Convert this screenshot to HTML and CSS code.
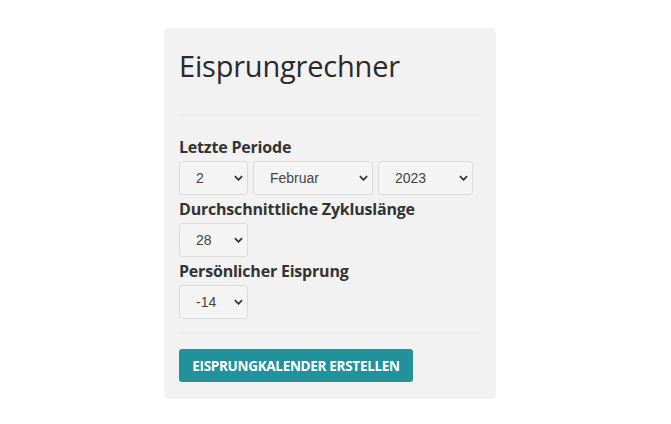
FILE: index.html
```html
<!DOCTYPE html>
<html lang="de">
<head>
<meta charset="utf-8">
<title>Eisprungrechner</title>
<link rel="stylesheet" href="styles.css">
</head>
<body>
<div class="page">
  <form class="card">
    <h1 class="title">Eisprungrechner</h1>
    <hr class="rule rule-top">
    <label class="label">Letzte Periode</label>
    <div class="row">
      <div class="sel w-day"><select><option>2</option></select><svg class="chev" viewBox="0 0 10 6" width="9" height="6"><path d="M1 1l4 4 4-4" fill="none" stroke="#333" stroke-width="2"/></svg></div>
      <div class="sel w-month"><select><option>Februar</option></select><svg class="chev" viewBox="0 0 10 6" width="9" height="6"><path d="M1 1l4 4 4-4" fill="none" stroke="#333" stroke-width="2"/></svg></div>
      <div class="sel w-year"><select><option>2023</option></select><svg class="chev" viewBox="0 0 10 6" width="9" height="6"><path d="M1 1l4 4 4-4" fill="none" stroke="#333" stroke-width="2"/></svg></div>
    </div>
    <label class="label">Durchschnittliche Zykluslänge</label>
    <div class="row">
      <div class="sel w-day"><select><option>28</option></select><svg class="chev" viewBox="0 0 10 6" width="9" height="6"><path d="M1 1l4 4 4-4" fill="none" stroke="#333" stroke-width="2"/></svg></div>
    </div>
    <label class="label">Persönlicher Eisprung</label>
    <div class="row">
      <div class="sel w-day"><select><option>-14</option></select><svg class="chev" viewBox="0 0 10 6" width="9" height="6"><path d="M1 1l4 4 4-4" fill="none" stroke="#333" stroke-width="2"/></svg></div>
    </div>
    <hr class="rule rule-bottom">
    <button type="button" class="btn">Eisprungkalender erstellen</button>
  </form>
</div>
</body>
</html>
```

FILE: styles.css
```css
html, body {
  margin: 0;
  padding: 0;
  background: #ffffff;
}
.page {
  padding: 28px 0 0 164px;
}
.card {
  width: 332px;
  box-sizing: border-box;
  background: #f2f2f2;
  border-radius: 5px;
  padding: 21px 15px 17px 15px;
  font-family: "Open Sans", "Noto Sans", sans-serif;
  color: #333333;
  display: flex;
  flex-direction: column;
  align-items: flex-start;
}
.title {
  margin: 0;
  font-size: 29px;
  font-weight: 500;
  line-height: 34px;
  letter-spacing: -0.2px;
  color: #2a2a2a;
}
.rule {
  align-self: stretch;
  border: 0;
  border-top: 1px solid #e8e8e8;
  margin: 0;
}
.rule-top { margin-top: 32px; margin-bottom: 20px; }
.rule-bottom { margin-top: 10px; margin-bottom: 16px; }
.label {
  font-size: 16px;
  font-weight: 700;
  line-height: 22px;
  letter-spacing: -0.2px;
  color: #333333;
}
.row {
  display: flex;
  gap: 5px;
  margin-top: 3px;
  margin-bottom: 3px;
}
.sel {
  position: relative;
  height: 34px;
}
.sel select {
  appearance: none;
  -webkit-appearance: none;
  width: 100%;
  height: 34px;
  box-sizing: border-box;
  border: 1px solid #dcdcdc;
  border-radius: 3px;
  background: #f4f4f4;
  font-family: "Liberation Sans", Arial, sans-serif;
  font-size: 14px;
  color: #444444;
  padding: 0 0 0 16px;
  outline: none;
}
.w-day { width: 69px; }
.w-month { width: 120px; }
.w-year { width: 95px; }
.chev {
  position: absolute;
  right: 5px;
  top: 14px;
  pointer-events: none;
}
.btn {
  width: 234px;
  height: 33px;
  border: 0;
  border-radius: 3px;
  background: #21929b;
  color: #ffffff;
  font-family: "Open Sans", "Noto Sans", sans-serif;
  font-weight: 700;
  font-size: 13.5px;
  letter-spacing: -0.3px;
  text-transform: uppercase;
  padding: 0;
}
```
